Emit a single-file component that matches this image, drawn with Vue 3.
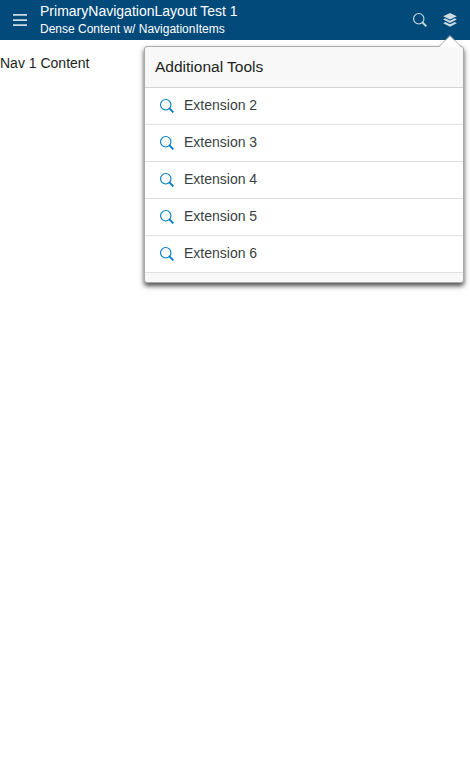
<script setup>
const extensions = [2, 3, 4, 5, 6].map((n) => `Extension ${n}`)
</script>

<template>
  <div class="app">
    <header class="bar">
      <button class="menu" aria-label="Menu">
        <svg width="14" height="12" viewBox="0 0 14 12"><path d="M0 .9h14M0 6h14M0 11.100h14" /></svg>
      </button>
      <div class="titles">
        <div class="title">PrimaryNavigationLayout Test 1</div>
        <div class="subtitle">Dense Content w/ NavigationItems</div>
      </div>
      <button class="tool" aria-label="Search">
        <svg class="search" viewBox="0 0 14 14">
          <circle cx="5.75" cy="5.75" r="5.2" />
          <path d="M9.200 9.200 13.400 13.400" />
        </svg>
      </button>
      <button class="tool" aria-label="Additional tools">
        <svg class="layers" viewBox="0 0 14 14">
          <path d="M7 0 13.800 3.300 7 6.500 .2 3.300z" />
          <path d="M2.200 5.300 .2 6.600 7 10 13.800 6.600 11.800 5.300 7 7.700z" />
          <path d="M2.200 8.900 .2 10.200 7 13.700 13.800 10.200 11.800 8.900 7 11.300z" />
        </svg>
        <svg class="arrow" width="24" height="12" viewBox="0 0 24 12">
          <path class="fill" d="M1 12 12 1 23 12z" />
          <path class="edge" d="M1 11.500 12 .6 23 11.500" />
        </svg>
      </button>
    </header>
    <main class="content">Nav 1 Content</main>
    <section class="popup">
      <h2 class="heading">Additional Tools</h2>
      <ul class="list">
        <li v-for="name in extensions" :key="name" class="row">
          <svg class="search" viewBox="0 0 14 14">
            <circle cx="5.75" cy="5.75" r="5.2" />
            <path d="M9.200 9.200 13.400 13.400" />
          </svg>
          <span>{{ name }}</span>
        </li>
      </ul>
    </section>
  </div>
</template>

<style>
body {
  background: #fff;
}
</style>

<style scoped>
.app {
  position: relative;
  min-height: 768px;
  font-family: "Liberation Sans", Arial, sans-serif;
  font-size: 14px;
  color: #1c1f21;
}
.bar {
  display: flex;
  align-items: center;
  height: 40px;
  padding-right: 5px;
  background: #024a7a;
  color: #fff;
}
button {
  display: flex;
  align-items: center;
  justify-content: center;
  padding: 0;
  border: 0;
  background: none;
}
.menu {
  width: 40px;
  height: 40px;
}
.menu path {
  fill: none;
  stroke: #ccdbe4;
  stroke-width: 1.75;
}
.titles {
  flex: 1;
}
.title {
  height: 19px;
  font-size: 14.03px;
  line-height: 18px;
}
.subtitle {
  height: 17px;
  font-size: 12px;
  line-height: 16px;
}
.tool {
  position: relative;
  width: 30px;
  height: 40px;
}
.search,
.layers {
  flex: none;
  width: 14px;
  height: 14px;
}
.layers {
  fill: #ccdbe4;
}
.search {
  fill: none;
  stroke: #ccdbe4;
  stroke-width: 1.1;
}
.search path {
  stroke-width: 1.9;
}
.arrow {
  position: absolute;
  z-index: 2;
  left: 3px;
  top: 35px;
}
.arrow .fill {
  fill: #fff;
}
.arrow .edge {
  fill: none;
  stroke: #a3a8aa;
  stroke-width: 1;
}
.content {
  padding-top: 15px;
  line-height: 17px;
}
.popup {
  position: absolute;
  top: 46px;
  left: 144px;
  box-sizing: border-box;
  width: 320px;
  height: 237px;
  border: 1px solid #a8abac;
  border-radius: 3px;
  background: #f8f8f8;
  box-shadow: 0 3px 5px rgba(0, 0, 0, 0.7);
}
.heading {
  margin: 0;
  padding-left: 10px;
  height: 40px;
  border-bottom: 1px solid #d3d5d6;
  font-size: 15.5px;
  font-weight: 400;
  line-height: 40px;
}
.list {
  margin: 0;
  padding: 0;
  list-style: none;
}
.row {
  display: flex;
  align-items: center;
  gap: 10px;
  height: 36px;
  padding-left: 15px;
  border-bottom: 1px solid #dedfe0;
  background: #fff;
  color: #383f42;
}
.row span {
  height: 18px;
  line-height: 16px;
}
.row .search {
  stroke: #007cc3;
}
</style>
